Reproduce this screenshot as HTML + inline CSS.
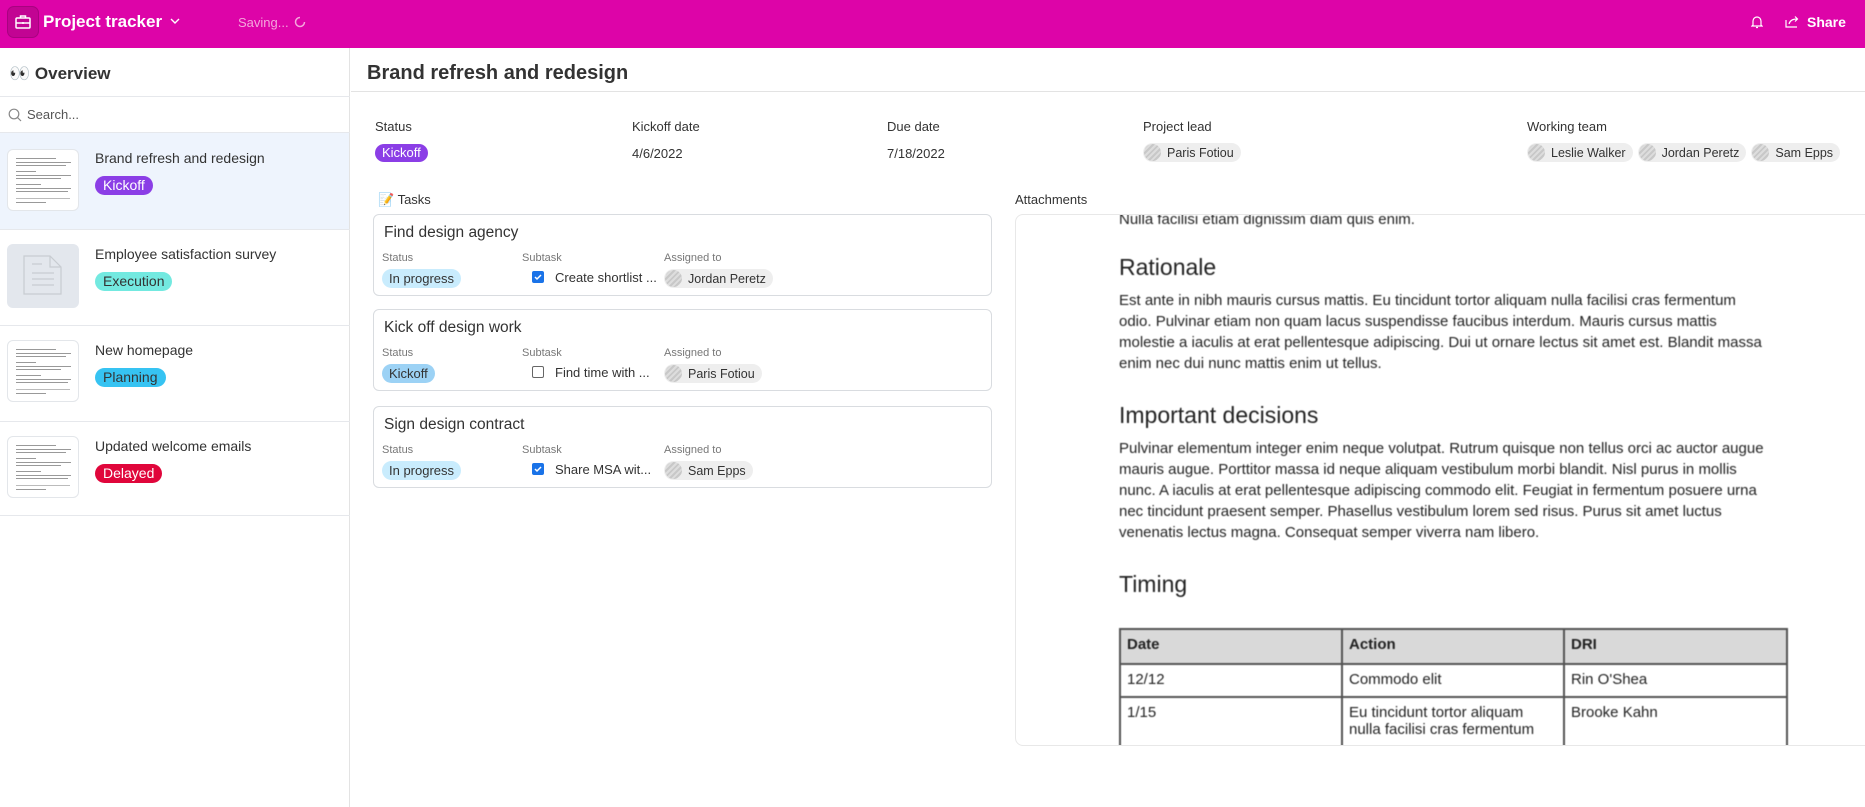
<!DOCTYPE html>
<html><head><meta charset="utf-8"><style>
*{box-sizing:border-box;margin:0;padding:0}
body{width:1865px;height:807px;overflow:hidden;background:#fff;font-family:"Liberation Sans",sans-serif;color:#333;position:relative}
.abs{position:absolute}
.hdr{left:0;top:0;width:1865px;height:48px;background:#dd04a8}
.sb{left:0;top:48px;width:350px;height:759px;border-right:1px solid #e3e3e3}
.line{height:1px;background:#e6e8ec}
.badge{display:inline-block;border-radius:10px;padding:0 8px;height:19px;line-height:19px;font-size:14px}
.thumb{position:absolute;left:7px;width:72px;height:62px;border:1px solid #e3e6ea;border-radius:6px;background:#fff;overflow:hidden}
.thumb i{position:absolute;left:8px;height:1px;background:#999}
.title{font-size:14px;color:#333}
.lbl{font-size:13px;color:#333}
.chip{display:inline-flex;align-items:center;height:19px;border-radius:10px;background:#eee;font-size:12.5px;padding-right:7px;color:#333}
.av{width:17px;height:17px;border-radius:50%;margin:0 6px 0 1px;background:repeating-linear-gradient(135deg,#ddd 0 2px,#c8c8c8 2px 4px)}
.card{position:absolute;left:373px;width:619px;height:82px;border:1px solid #d9dce0;border-radius:6px;background:#fff}
.card .t{position:absolute;left:10px;top:9px;font-size:15.5px;color:#333}
.card .s{position:absolute;top:37px;font-size:11px;color:#777}
.card .v{position:absolute;top:54px;font-size:13px}
.cb{display:inline-block;width:12px;height:12px;border-radius:2px;vertical-align:-1px;margin-right:11px;position:relative}
.doc{font-family:"Liberation Sans",sans-serif;color:#222;filter:blur(0.5px)}
.doc p{font-size:15px;line-height:21px}
.doc h2{font-size:23px;font-weight:normal}
td{border:2px solid #555;font-size:15px;padding:6px 6px;vertical-align:top}
</style></head><body>
<div class="abs hdr">
  <div class="abs" style="left:7px;top:6px;width:32px;height:32px;border-radius:7px;background:#c20493;border:1px solid #a80380"></div>
  <svg class="abs" style="left:14px;top:13px" width="18" height="18" viewBox="0 0 18 18" fill="none" stroke="#fff" stroke-width="1.5"><rect x="2" y="5" width="14" height="10" rx="1"/><path d="M6.5 5V3h5v2M2 10h14M9 9v2"/></svg>
  <div class="abs" style="left:43px;top:12px;font-size:17px;font-weight:bold;color:#fff">Project tracker</div>
  <svg class="abs" style="left:170px;top:18px" width="10" height="7" viewBox="0 0 10 7" fill="none" stroke="#fff" stroke-width="1.4"><path d="M1 1l4 4 4-4"/></svg>
  <div class="abs" style="left:238px;top:15px;font-size:13px;color:#f4a6dc">Saving...</div>
  <svg class="abs" style="left:294px;top:16px" width="12" height="12" viewBox="0 0 12 12" fill="none" stroke="#f4a6dc" stroke-width="1.5"><path d="M10.5 6A4.5 4.5 0 1 1 6 1.5"/></svg>
  <svg class="abs" style="left:1751px;top:15px" width="12" height="14" viewBox="0 0 12 14" fill="none" stroke="#fff" stroke-width="1.2"><path d="M2 10V6a4 4 0 0 1 8 0v4l1 1H1zM5 12.5h2"/></svg>
  <svg class="abs" style="left:1785px;top:15px" width="14" height="13" viewBox="0 0 14 13" fill="none" stroke="#fff" stroke-width="1.2"><path d="M1 5v7h11M4 9c1-4 4-5 8-5M10 1.5L12.5 4 10 6.5"/></svg>
  <div class="abs" style="left:1807px;top:14px;font-size:14px;font-weight:bold;color:#fff">Share</div>
</div>
<div class="abs sb">
  <div class="abs" style="left:9px;top:16px;font-size:17px;font-weight:bold;color:#333">👀 Overview</div>
  <div class="abs line" style="left:0;top:48px;width:350px"></div>
  <svg class="abs" style="left:8px;top:60px" width="14" height="14" viewBox="0 0 14 14" fill="none" stroke="#888" stroke-width="1.2"><circle cx="6" cy="6" r="4.8"/><path d="M9.5 9.5L13 13"/></svg>
  <div class="abs" style="left:27px;top:59px;font-size:13px;color:#555">Search...</div>
  <div class="abs line" style="left:0;top:84px;width:350px"></div>
  <div class="abs" style="left:0;top:85px;width:349px;height:96px;background:#eef4fd"></div>
  <div class="abs line" style="left:0;top:181px;width:350px"></div>
  <div class="abs line" style="left:0;top:277px;width:350px"></div>
  <div class="abs line" style="left:0;top:373px;width:350px"></div>
  <div class="abs line" style="left:0;top:467px;width:350px"></div>

  <div class="thumb" style="top:101px"><i style="top:8px;width:40px"></i><i style="top:12px;width:55px"></i><i style="top:15px;width:50px"></i><i style="top:21px;width:20px"></i><i style="top:25px;width:55px"></i><i style="top:28px;width:45px"></i><i style="top:34px;width:25px"></i><i style="top:38px;width:55px"></i><i style="top:41px;width:52px"></i><i style="top:48px;width:54px;background:#bbb"></i><i style="top:52px;width:30px"></i></div>
  <div class="abs title" style="left:95px;top:102px">Brand refresh and redesign</div>
  <div class="abs badge" style="left:95px;top:128px;background:#8b3ee6;color:#fff">Kickoff</div>

  <div class="abs" style="left:7px;top:196px;width:72px;height:64px;border-radius:6px;background:#e3e7ed"></div>
  <svg class="abs" style="left:22px;top:206px" width="42" height="42" viewBox="0 0 42 42" fill="none" stroke="#c8ccd1" stroke-width="1.2"><path d="M2 2h26l11 11v27H2zM28 2v11h11M10 10h10M10 19h22M10 25h22M10 31h22"/></svg>
  <div class="abs title" style="left:95px;top:198px">Employee satisfaction survey</div>
  <div class="abs badge" style="left:95px;top:224px;background:#73e9e0;color:#333">Execution</div>

  <div class="thumb" style="top:292px"><i style="top:8px;width:40px"></i><i style="top:12px;width:55px"></i><i style="top:15px;width:50px"></i><i style="top:21px;width:20px"></i><i style="top:25px;width:55px"></i><i style="top:28px;width:45px"></i><i style="top:34px;width:25px"></i><i style="top:38px;width:55px"></i><i style="top:41px;width:52px"></i><i style="top:48px;width:54px;background:#bbb"></i><i style="top:52px;width:30px"></i></div>
  <div class="abs title" style="left:95px;top:294px">New homepage</div>
  <div class="abs badge" style="left:95px;top:320px;background:#36c3f2;color:#333">Planning</div>

  <div class="thumb" style="top:388px"><i style="top:8px;width:40px"></i><i style="top:12px;width:55px"></i><i style="top:15px;width:50px"></i><i style="top:21px;width:20px"></i><i style="top:25px;width:55px"></i><i style="top:28px;width:45px"></i><i style="top:34px;width:25px"></i><i style="top:38px;width:55px"></i><i style="top:41px;width:52px"></i><i style="top:48px;width:54px;background:#bbb"></i><i style="top:52px;width:30px"></i></div>
  <div class="abs title" style="left:95px;top:390px">Updated welcome emails</div>
  <div class="abs badge" style="left:95px;top:416px;background:#e0063b;color:#fff">Delayed</div>
</div>

<div class="abs" style="left:367px;top:62px;font-size:20px;font-weight:bold;color:#333">Brand refresh and redesign</div>
<div class="abs line" style="left:351px;top:91px;width:1514px;background:#e3e3e3"></div>

<div class="abs lbl" style="left:375px;top:119px">Status</div>
<div class="abs badge" style="left:375px;top:144px;background:#8b3ee6;color:#fff;font-size:13px;padding:0 7px;height:18px;line-height:18px">Kickoff</div>
<div class="abs lbl" style="left:632px;top:119px">Kickoff date</div>
<div class="abs lbl" style="left:632px;top:146px">4/6/2022</div>
<div class="abs lbl" style="left:887px;top:119px">Due date</div>
<div class="abs lbl" style="left:887px;top:146px">7/18/2022</div>
<div class="abs lbl" style="left:1143px;top:119px">Project lead</div>
<div class="abs" style="left:1143px;top:143px"><span class="chip"><span class="av"></span>Paris Fotiou</span></div>
<div class="abs lbl" style="left:1527px;top:119px">Working team</div>
<div class="abs" style="left:1527px;top:143px;display:flex;gap:5px"><span class="chip"><span class="av"></span>Leslie Walker</span><span class="chip"><span class="av"></span>Jordan Peretz</span><span class="chip"><span class="av"></span>Sam Epps</span></div>

<div class="abs lbl" style="left:378px;top:192px">📝 Tasks</div>
<div class="card" style="top:214px"><div class="t">Find design agency</div>
  <div class="s" style="left:8px">Status</div><div class="s" style="left:148px">Subtask</div><div class="s" style="left:290px">Assigned to</div>
  <div class="v" style="left:8px"><span class="badge" style="background:#c9ecfd;font-size:13px;padding:0 7px">In progress</span></div>
  <div class="v" style="left:158px;top:55px"><span class="cb" style="background:#1a73e8"><svg class="abs" style="left:2px;top:2px" width="8" height="8" viewBox="0 0 8 8" fill="none" stroke="#fff" stroke-width="1.5"><path d="M1 4l2 2 4-4"/></svg></span>Create shortlist ...</div>
  <div class="v" style="left:290px"><span class="chip"><span class="av"></span>Jordan Peretz</span></div>
</div>
<div class="card" style="top:309px"><div class="t">Kick off design work</div>
  <div class="s" style="left:8px">Status</div><div class="s" style="left:148px">Subtask</div><div class="s" style="left:290px">Assigned to</div>
  <div class="v" style="left:8px"><span class="badge" style="background:#9cd2f5;font-size:13px;padding:0 7px">Kickoff</span></div>
  <div class="v" style="left:158px;top:55px"><span class="cb" style="border:1px solid #666"></span>Find time with ...</div>
  <div class="v" style="left:290px"><span class="chip"><span class="av"></span>Paris Fotiou</span></div>
</div>
<div class="card" style="top:406px"><div class="t">Sign design contract</div>
  <div class="s" style="left:8px">Status</div><div class="s" style="left:148px">Subtask</div><div class="s" style="left:290px">Assigned to</div>
  <div class="v" style="left:8px"><span class="badge" style="background:#c9ecfd;font-size:13px;padding:0 7px">In progress</span></div>
  <div class="v" style="left:158px;top:55px"><span class="cb" style="background:#1a73e8"><svg class="abs" style="left:2px;top:2px" width="8" height="8" viewBox="0 0 8 8" fill="none" stroke="#fff" stroke-width="1.5"><path d="M1 4l2 2 4-4"/></svg></span>Share MSA wit...</div>
  <div class="v" style="left:290px"><span class="chip"><span class="av"></span>Sam Epps</span></div>
</div>

<div class="abs lbl" style="left:1015px;top:192px">Attachments</div>
<div class="abs" style="left:1015px;top:214px;width:860px;height:532px;border:1px solid #e8e8e8;border-radius:8px;overflow:hidden;background:#fff">
 <div class="doc abs" style="left:103px;top:-6px;width:650px">
  <p>Nulla facilisi etiam dignissim diam quis enim.</p>
  <h2 style="margin-top:24px">Rationale</h2>
  <p style="margin-top:9px">Est ante in nibh mauris cursus mattis. Eu tincidunt tortor aliquam nulla facilisi cras fermentum odio. Pulvinar etiam non quam lacus suspendisse faucibus interdum. Mauris cursus mattis molestie a iaculis at erat pellentesque adipiscing. Dui ut ornare lectus sit amet est. Blandit massa enim nec dui nunc mattis enim ut tellus.</p>
  <h2 style="margin-top:28px">Important decisions</h2>
  <p style="margin-top:9px">Pulvinar elementum integer enim neque volutpat. Rutrum quisque non tellus orci ac auctor augue mauris augue. Porttitor massa id neque aliquam vestibulum morbi blandit. Nisl purus in mollis nunc. A iaculis at erat pellentesque adipiscing commodo elit. Feugiat in fermentum posuere urna nec tincidunt praesent semper. Phasellus vestibulum lorem sed risus. Purus sit amet luctus venenatis lectus magna. Consequat semper viverra nam libero.</p>
  <h2 style="margin-top:28px">Timing</h2>
  <table style="margin-top:30px;border-collapse:collapse;width:669px">
   <tr style="background:#d9d9d9;height:35px"><td style="width:222px"><b>Date</b></td><td style="width:222px"><b>Action</b></td><td><b>DRI</b></td></tr>
   <tr style="height:33px"><td>12/12</td><td>Commodo elit</td><td>Rin O'Shea</td></tr>
   <tr style="height:60px"><td>1/15</td><td>Eu tincidunt tortor aliquam nulla facilisi cras fermentum</td><td>Brooke Kahn</td></tr>
  </table>
 </div>
</div>
</body></html>
